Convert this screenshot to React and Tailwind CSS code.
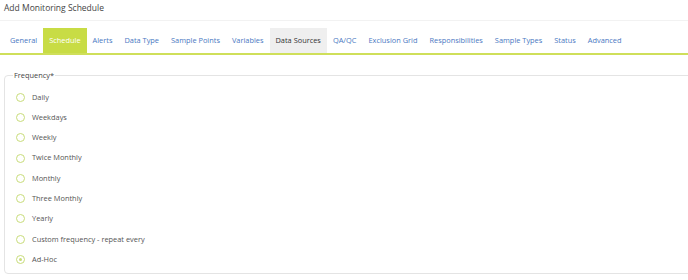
import React from "react";

const tabs = [
  "General",
  "Schedule",
  "Alerts",
  "Data Type",
  "Sample Points",
  "Variables",
  "Data Sources",
  "QA/QC",
  "Exclusion Grid",
  "Responsibilities",
  "Sample Types",
  "Status",
  "Advanced",
];

const options = [
  "Daily",
  "Weekdays",
  "Weekly",
  "Twice Monthly",
  "Monthly",
  "Three Monthly",
  "Yearly",
  "Custom frequency - repeat every",
  "Ad-Hoc",
];

export default function App() {
  return (
    <div
      className="w-[688px] h-[280px] bg-white overflow-hidden"
      style={{ fontFamily: '"Open Sans", "Liberation Sans", sans-serif' }}
    >
      <div className="h-[21px] pl-[4px] pt-[1px] text-[8.5px] leading-[13px] text-[#444] border-b border-[#f2f2f2]">
        Add Monitoring Schedule
      </div>
      <div className="mt-[7px] pl-[4px] flex border-b-2 border-[#cfdf5a]">
        {tabs.map((t) => (
          <div
            key={t}
            className={
              "h-[25px] px-[6px] flex items-center text-[7.4px] " +
              (t === "Schedule"
                ? "bg-[#c8dc45] text-white"
                : t === "Data Sources"
                ? "bg-[#efefef] text-[#333]"
                : "text-[#4a78c2]")
            }
          >
            {t}
          </div>
        ))}
      </div>
      <fieldset className="mt-[15px] ml-[4px] w-[700px] h-[204px] border border-[#e4e4e4] rounded-[4px] pl-[8px] pr-0 pt-[0px] pb-0 m-0">
        <legend className="px-[1px] text-[7.4px] text-[#444] leading-[10px]">
          Frequency*
        </legend>
        <div className="flex flex-col pl-[3px] pt-[7px]">
          {options.map((o) => (
            <div key={o} className="h-[20.3px] flex items-center">
              <span className="w-[9px] h-[9px] rounded-full border border-[#c8dc7a] flex items-center justify-center">
                {o === "Ad-Hoc" && (
                  <span className="w-[3px] h-[3px] rounded-full bg-[#c8dc7a]" />
                )}
              </span>
              <span className="ml-[7px] text-[7.4px] text-[#555]">{o}</span>
            </div>
          ))}
        </div>
      </fieldset>
    </div>
  );
}
